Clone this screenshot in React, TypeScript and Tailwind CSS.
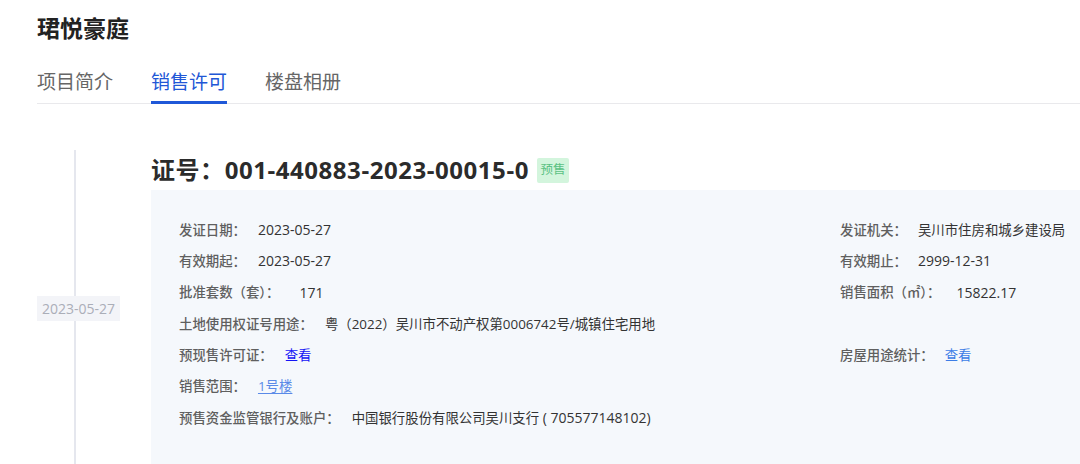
import React from "react";

const FONT = { fontFamily: '"Open Sans", "Noto Sans CJK SC", sans-serif' };

function Row({
  label,
  children,
  gap = "gap-[12px]",
  num = false,
}: {
  label: string;
  children?: React.ReactNode;
  gap?: string;
  num?: boolean;
}) {
  return (
    <div className={`flex items-center ${gap} h-[31.33px] text-[13.4px] whitespace-nowrap`}>
      <span className="text-[#5f5f5f] font-medium">{label}</span>
      <span className={`text-[#333] ${num ? "text-[14px]" : "text-[13.4px]"}`}>{children}</span>
    </div>
  );
}

export default function App() {
  return (
    <div className="w-[1080px] h-[464px] overflow-hidden bg-white" style={FONT}>
      <div className="pl-[37px] pt-[14px]">
        <h1 className="text-[23px] leading-[28px] font-bold text-[#222]">珺悦豪庭</h1>
        <div className="mt-[20px] flex gap-[38px] border-b border-[#e9e9ec] h-[42px]">
          <div className="h-[42px] flex items-center text-[19px] text-[#666] pb-[2px]">项目简介</div>
          <div className="h-[42px] flex items-center text-[19px] text-[#2157d6] border-b-[3px] border-[#1f58d8] pt-[1px]">销售许可</div>
          <div className="h-[42px] flex items-center text-[19px] text-[#666] pb-[2px]">楼盘相册</div>
        </div>
      </div>

      <div className="flex pl-[37px] mt-[46px]">
        <div className="relative w-[114px] shrink-0">
          <div className="absolute left-[37px] top-0 h-[400px] w-[2px] bg-[#e5e7ee]" />
          <div className="relative mt-[146px] w-[83px] h-[25px] flex items-center justify-center bg-[#f3f4f8] text-[14px] text-[#abaeb8]">
            2023-05-27
          </div>
        </div>
        <div className="flex-1">
          <div className="h-[40px] flex items-center">
            <span className="text-[24px] font-bold text-[#2b2b2b] tracking-[0.55px]">证号：001-440883-2023-00015-0</span>
            <span className="ml-[8px] h-[25px] w-[32px] flex items-center justify-center bg-[#d3f5dd] text-[#5cc284] text-[12.5px] rounded-[2px]">预售</span>
          </div>
          <div className="bg-[#f5f8fc] h-[300px] pl-[28px] pt-[24px] grid grid-cols-[661px_1fr] content-start">
            <Row label="发证日期：" num>2023-05-27</Row>
            <Row label="发证机关：" gap="gap-[11px]">吴川市住房和城乡建设局</Row>
            <Row label="有效期起：" num>2023-05-27</Row>
            <Row label="有效期止：" gap="gap-[11px]" num>2999-12-31</Row>
            <Row label="批准套数（套）：" gap="gap-[20px]" num>171</Row>
            <Row label="销售面积（㎡）：" gap="gap-[16px]" num>15822.17</Row>
            <Row label="土地使用权证号用途：">粤（2022）吴川市不动产权第0006742号/城镇住宅用地</Row>
            <div />
            <Row label="预现售许可证："><span className="text-[#1414f5]">查看</span></Row>
            <Row label="房屋用途统计：" gap="gap-[11px]"><span className="text-[#3c7de6]">查看</span></Row>
            <Row label="销售范围："><span className="text-[#5a8ae8] underline underline-offset-2">1号楼</span></Row>
            <div />
            <Row label="预售资金监管银行及账户：">
              中国银行股份有限公司吴川支行 <span className="text-[14px]">( 705577148102)</span>
            </Row>
            <div />
          </div>
        </div>
      </div>
    </div>
  );
}
